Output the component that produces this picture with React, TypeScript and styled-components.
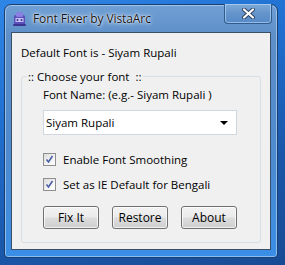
import React from 'react';
import styled, { createGlobalStyle } from 'styled-components';

const GlobalStyle = createGlobalStyle`
	html, body {
		margin: 0;
		padding: 0;
	}
	body {
		font-family: 'Open Sans', 'DejaVu Sans', sans-serif;
	}
`;

const Styled = {
	Desktop: styled.div`
		width: 285px;
		height: 265px;
		box-sizing: border-box;
		padding: 4px 7px 7px 4px;
		background: linear-gradient(160deg, #2f86e6 0%, #1f6fd0 35%, #1a56a8 70%, #184b94 100%);
		overflow: hidden;
	`,
	Window: styled.div`
		width: 274px;
		height: 254px;
		box-sizing: border-box;
		display: flex;
		flex-direction: column;
		border: 1px solid #1b3f6e;
		border-radius: 7px 7px 4px 4px;
		background: linear-gradient(180deg, #6f9fd4 0%, #5e8fc8 12%, #4e8acf 60%, #3a8ee6 100%);
		box-shadow: inset 0 0 0 1px rgba(200, 230, 255, 0.55);
	`,
	TitleBar: styled.div`
		height: 27px;
		display: flex;
		align-items: center;
		padding-left: 7px;
		position: relative;
	`,
	AppIcon: styled.svg`
		width: 15px;
		height: 16px;
		flex: none;
	`,
	Title: styled.div`
		margin-left: 6px;
		font-family: 'Open Sans', sans-serif;
		font-size: 12px;
		color: #111;
		text-shadow: 0 0 6px #e8f2ff, 0 0 3px #e8f2ff, 0 0 1px #fff;
		letter-spacing: -0.1px;
	`,
	CloseButton: styled.div`
		position: absolute;
		top: -1px;
		right: 5px;
		width: 48px;
		height: 20px;
		box-sizing: border-box;
		border: 1px solid #2f5b8e;
		border-top: none;
		border-radius: 0 0 4px 4px;
		background: linear-gradient(180deg, #7ea9d8 0%, #6594cb 50%, #5689c6 100%);
		box-shadow: inset 0 0 0 1px rgba(190, 220, 250, 0.6);
		display: flex;
		align-items: center;
		justify-content: center;
	`,
	Client: styled.div`
		flex: 1;
		margin: 0 6px 7px 6px;
		border: 1px solid #3a4f68;
		background: #f0f0f0;
		display: flex;
		flex-direction: column;
		padding: 12px 9px 6px 9px;
		font-size: 11.5px;
		color: #000;
	`,
	Heading: styled.div`
		line-height: 15px;
		margin-bottom: 9px;
	`,
	Group: styled.fieldset`
		flex: 1;
		margin: 0;
		border: 1px solid #d5dfe5;
		border-radius: 3px;
		padding: 3px 0 0 21px;
		display: flex;
		flex-direction: column;
		align-items: flex-start;
	`,
	Legend: styled.legend`
		padding: 0 2px 0 1px;
		margin-left: -16px;
		line-height: 15px;
	`,
	Label: styled.div`
		line-height: 15px;
	`,
	Select: styled.div`
		margin-top: 8px;
		width: 194px;
		height: 25px;
		flex: none;
		box-sizing: border-box;
		border: 1px solid #d0d7df;
		background: #fff;
		display: flex;
		align-items: center;
		justify-content: space-between;
		padding: 0 8px 0 2px;
	`,
	Arrow: styled.span`
		width: 0;
		height: 0;
		border-left: 4px solid transparent;
		border-right: 4px solid transparent;
		border-top: 4px solid #000;
	`,
	CheckRow: styled.div<{ first?: boolean }>`
		display: flex;
		align-items: center;
		margin-top: ${props => (props.first ? '17px' : '10px')};
		line-height: 15px;
	`,
	Box: styled.span`
		width: 13px;
		height: 13px;
		box-sizing: border-box;
		border: 1px solid #8e8f8f;
		background: linear-gradient(135deg, #dcdcdc 0%, #f4f4f4 60%, #fff 100%);
		display: flex;
		align-items: center;
		justify-content: center;
		margin-right: 7px;
	`,
	Buttons: styled.div`
		display: flex;
		gap: 13px;
		margin-top: 14px;
	`,
	Button: styled.button`
		width: 56px;
		height: 23px;
		box-sizing: border-box;
		padding: 0;
		border: 1px solid #707070;
		border-radius: 3px;
		background: linear-gradient(180deg, #f2f2f2 0%, #ebebeb 48%, #dddddd 52%, #cfcfcf 100%);
		box-shadow: inset 0 0 0 1px rgba(255, 255, 255, 0.7);
		font-family: inherit;
		font-size: 12px;
		color: #000;
	`,
};

const AppIcon = () => (
	<Styled.AppIcon viewBox="0 0 15 16">
		<rect x="2" y="4" width="11" height="10" rx="2" fill="#5a4fb8" />
		<rect x="4" y="1" width="7" height="5" rx="1.5" fill="#8a7fe0" />
		<rect x="3.5" y="7" width="8" height="4" fill="#c9c3f5" />
		<circle cx="5.5" cy="9" r="1" fill="#3a2f8a" />
		<circle cx="9.5" cy="9" r="1" fill="#3a2f8a" />
		<rect x="1" y="13" width="13" height="2" rx="1" fill="#3d3490" />
	</Styled.AppIcon>
);

const CloseGlyph = () => (
	<svg width="13" height="11" viewBox="0 0 13 11">
		<path
			d="M2 1.5 L11 9.5 M11 1.5 L2 9.5"
			stroke="#2b3f5c"
			strokeWidth="4"
			strokeLinecap="round"
		/>
		<path
			d="M2 1.5 L11 9.5 M11 1.5 L2 9.5"
			stroke="#fff"
			strokeWidth="2.2"
			strokeLinecap="round"
		/>
	</svg>
);

const Check = () => (
	<svg width="9" height="9" viewBox="0 0 9 9">
		<path
			d="M1.5 4.5 L3.5 7 L7.5 1"
			fill="none"
			stroke="#4b5fa6"
			strokeWidth="1.6"
		/>
	</svg>
);

const App = () => {
	return (
		<Styled.Desktop>
			<GlobalStyle />
			<Styled.Window>
				<Styled.TitleBar>
					<AppIcon />
					<Styled.Title>Font Fixer by VistaArc</Styled.Title>
					<Styled.CloseButton>
						<CloseGlyph />
					</Styled.CloseButton>
				</Styled.TitleBar>
				<Styled.Client>
					<Styled.Heading>Default Font is - Siyam Rupali</Styled.Heading>
					<Styled.Group>
						<Styled.Legend>:: Choose your font&nbsp; ::</Styled.Legend>
						<Styled.Label>Font Name: (e.g.- Siyam Rupali )</Styled.Label>
						<Styled.Select>
							<span>Siyam Rupali</span>
							<Styled.Arrow />
						</Styled.Select>
						<Styled.CheckRow first>
							<Styled.Box>
								<Check />
							</Styled.Box>
							Enable Font Smoothing
						</Styled.CheckRow>
						<Styled.CheckRow>
							<Styled.Box>
								<Check />
							</Styled.Box>
							Set as IE Default for Bengali
						</Styled.CheckRow>
						<Styled.Buttons>
							<Styled.Button>Fix It</Styled.Button>
							<Styled.Button>Restore</Styled.Button>
							<Styled.Button>About</Styled.Button>
						</Styled.Buttons>
					</Styled.Group>
				</Styled.Client>
			</Styled.Window>
		</Styled.Desktop>
	);
};

export default App;
